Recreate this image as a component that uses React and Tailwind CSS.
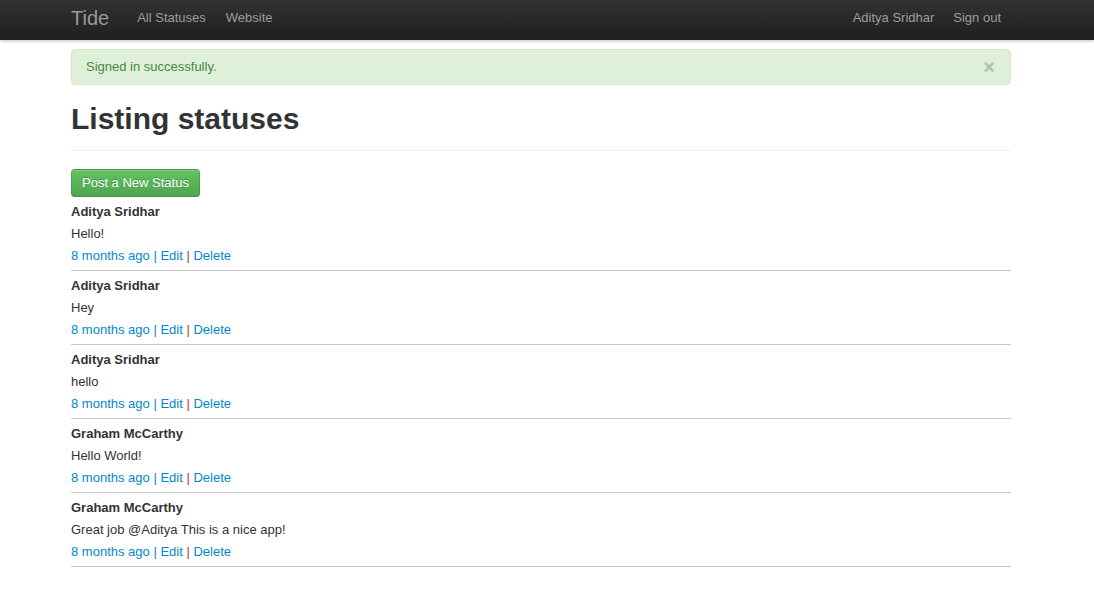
import React from "react";

const statuses = [
  { name: "Aditya Sridhar", content: "Hello!" },
  { name: "Aditya Sridhar", content: "Hey" },
  { name: "Aditya Sridhar", content: "hello" },
  { name: "Graham McCarthy", content: "Hello World!" },
  { name: "Graham McCarthy", content: "Great job @Aditya This is a nice app!" },
];

export default function App() {
  return (
    <div
      className="min-h-[602px] bg-white text-[13px] text-[#333]"
      style={{ fontFamily: '"Liberation Sans", Arial, Helvetica, sans-serif' }}
    >
      <div className="h-[40px] bg-gradient-to-b from-[#333333] to-[#1e1e1e] shadow-[0_1px_3px_rgba(0,0,0,0.25)] border-b border-[#252525]">
        <div className="ml-[71px] w-[940px] flex items-start">
          <a className="pt-[8px] leading-[20px] text-[20px] text-[#999] mr-[28px]">Tide</a>
          <a className="pt-[9px] leading-[18px] text-[#9d9d9d]">All Statuses</a>
          <a className="pt-[9px] leading-[18px] text-[#9d9d9d] ml-[20px]">Website</a>
          <div className="flex-1" />
          <a className="pt-[9px] leading-[18px] text-[#9d9d9d]">Aditya Sridhar</a>
          <a className="pt-[9px] leading-[18px] text-[#9d9d9d] ml-[19px] mr-[10px]">Sign out</a>
        </div>
      </div>

      <div className="ml-[71px] w-[940px]">
        <div className="relative mt-[9px] h-[36px] rounded-[4px] border border-[#d6e9c6] bg-[#dff0d8] pl-[14px] pt-[8px] leading-[18px] text-[#468847]">
          Signed in successfully.
          <span className="absolute right-[15px] top-[8px] text-[20px] font-bold leading-[18px] text-black opacity-20">
            ×
          </span>
        </div>

        <div className="mt-[16px] border-b border-[#eeeeee] pb-[13px]">
          <h1 className="text-[30px] font-bold leading-[36px] text-[#333]">Listing statuses</h1>
        </div>

        <button className="mt-[18px] h-[28px] rounded-[4px] border border-[rgba(0,0,0,0.12)] border-b-[rgba(0,0,0,0.25)] bg-gradient-to-b from-[#62c462] to-[#51a351] px-[10px] text-[13px] leading-[18px] text-white [text-shadow:0_-1px_0_rgba(0,0,0,0.25)] shadow-[inset_0_1px_0_rgba(255,255,255,0.2)]">
          Post a New Status
        </button>

        <div>
          {statuses.map((s, i) => (
            <div key={i} className="border-b border-[#c8c8c8] pt-[4px] pb-[3px] leading-[22px]">
              <div className="font-bold">{s.name}</div>
              <div>{s.content}</div>
              <div>
                <a className="text-[#0088cc]">8 months ago</a>
                <span className="text-[#0088cc]"> | </span>
                <a className="text-[#0088cc]">Edit</a>
                <span className="text-[#a8402c]"> | </span>
                <a className="text-[#0088cc]">Delete</a>
              </div>
            </div>
          ))}
        </div>
      </div>
    </div>
  );
}
